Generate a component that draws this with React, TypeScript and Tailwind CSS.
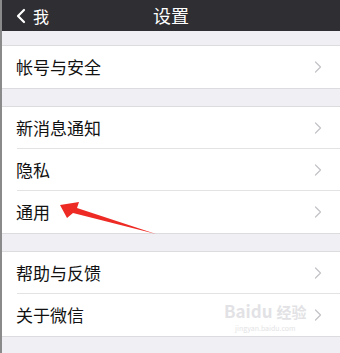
import { ChevronLeft, ChevronRight } from "lucide-react";

const font = { fontFamily: '"Noto Sans CJK SC", "Noto Sans", sans-serif' };

function Row({ label, divider }: { label: string; divider?: boolean }) {
    return (
        <div className="relative flex h-[42px] items-center bg-white pl-[14px] pr-[12px]">
            <span className="flex-1 text-[17px] text-[#111]">{label}</span>
            <ChevronRight className="h-[20px] w-[20px] text-[#c4c4c8]" strokeWidth={1.5} />
            {divider && <div className="absolute bottom-0 left-[15px] right-0 h-px bg-[#e3e3e6]" />}
        </div>
    );
}

function Group({ items }: { items: string[] }) {
    return (
        <div className="border-y border-[#dcdcdf]">
            {items.map((label, i) => (
                <Row key={label} label={label} divider={i < items.length - 1} />
            ))}
        </div>
    );
}

export default function App() {
    return (
        <div className="relative h-[353px] w-[340px] overflow-hidden bg-[#efeff4] border-l-2 border-[#8a8a8a]" style={font}>
            <div className="relative flex h-[31px] items-center bg-[#2f2e33] text-white">
                <div className="flex items-center pl-[7px]">
                    <ChevronLeft className="h-[24px] w-[24px]" strokeWidth={2.2} />
                    <span className="text-[16px]">我</span>
                </div>
                <span className="absolute left-1/2 -translate-x-1/2 text-[18px]">设置</span>
            </div>

            <div className="flex flex-col gap-[17px] pt-[14px]">
                <Group items={["帐号与安全"]} />
                <Group items={["新消息通知", "隐私", "通用"]} />
                <Group items={["帮助与反馈", "关于微信"]} />
            </div>

            <div className="absolute left-[222px] top-[302px] flex flex-col items-center text-[#dcdce0] opacity-80">
                <div className="flex h-[17px] items-end gap-[4px] leading-none">
                    <span className="text-[17px] font-bold leading-none">Baidu</span>
                    <span className="text-[15px] font-bold leading-none">经验</span>
                </div>
                <span className="mt-[6px] text-[7px] leading-none">jingyan.baidu.com</span>
            </div>

            <svg className="absolute left-0 top-0" width="340" height="353">
                <polygon points="58,205 77,202 75,208 154,234 71,213 65,218" fill="#ee2a24" />
            </svg>
        </div>
    );
}
